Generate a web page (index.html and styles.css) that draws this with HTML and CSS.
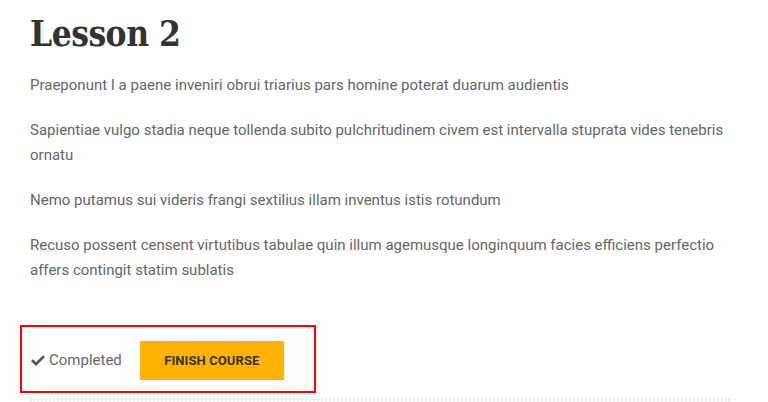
FILE: index.html
```html
<!DOCTYPE html>
<html>
<head>
<meta charset="utf-8">
<link rel="stylesheet" href="styles.css">
</head>
<body>
<main class="lesson">
  <h1 class="lesson-title">Lesson 2</h1>
  <p>Praeponunt I a paene inveniri obrui triarius pars homine poterat duarum audientis</p>
  <p>Sapientiae vulgo stadia neque tollenda subito pulchritudinem civem est intervalla stuprata vides tenebris ornatu</p>
  <p>Nemo putamus sui videris frangi sextilius illam inventus istis rotundum</p>
  <p>Recuso possent censent virtutibus tabulae quin illum agemusque longinquum facies efficiens perfectio affers contingit statim sublatis</p>
  <div class="lesson-footer">
    <div class="status-box">
      <span class="completed">
        <svg class="check" viewBox="0 0 16 13" width="16" height="13"><path d="M1 7.2 L2.9 5.3 L6 8.3 L13.1 1.2 L15 3.1 L6 12.1 Z" fill="#555"/></svg>
        Completed
      </span>
      <a class="finish-btn">FINISH COURSE</a>
    </div>
    <div class="divider"></div>
  </div>
</main>
</body>
</html>
```
FILE: styles.css
```css
html, body {
  margin: 0;
  padding: 0;
  background: #fff;
}
.lesson {
  width: 700px;
  padding: 0 0 0 30px;
  font-family: Roboto, "Noto Sans", sans-serif;
  color: #666;
  font-size: 15px;
  line-height: 25px;
}
.lesson-title {
  font-family: "DejaVu Serif Condensed", "DejaVu Serif", "Liberation Serif", serif;
  font-weight: bold;
  font-size: 35px;
  line-height: 40px;
  letter-spacing: -0.5px;
  color: #333;
  margin: 14px 0 19px;
}
.lesson p {
  margin: 0 0 20px;
}
.lesson-footer {
  margin-top: 42px;
}
.status-box {
  display: inline-flex;
  align-items: center;
  width: 284px;
  height: 60px;
  margin-left: -10px;
  padding: 3px 0 1px 8px;
  border: 2px solid #f00;
  gap: 18px;
}
.completed {
  display: inline-flex;
  align-items: center;
  gap: 3px;
  color: #666;
  font-size: 15px;
}
.finish-btn {
  display: inline-flex;
  align-items: center;
  justify-content: center;
  width: 144px;
  height: 39px;
  background: #ffb300;
  color: #333;
  font-weight: bold;
  font-size: 13px;
  letter-spacing: 0.1px;
}
.divider {
  margin-top: 6px;
  border-top: 2px dotted #e4e4e4;
}
```
